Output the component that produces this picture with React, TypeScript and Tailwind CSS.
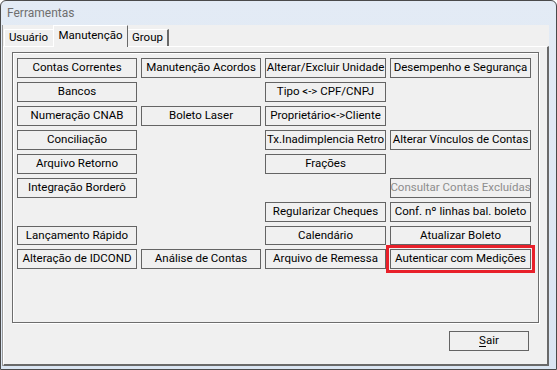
import React from "react"

type Btn = { label: string; disabled?: boolean; highlight?: boolean } | null

const rows: Btn[][] = [
  [{ label: "Contas Correntes" }, { label: "Manutenção Acordos" }, { label: "Alterar/Excluir Unidade" }, { label: "Desempenho e Segurança" }],
  [{ label: "Bancos" }, null, { label: "Tipo <-> CPF/CNPJ" }, null],
  [{ label: "Numeração CNAB" }, { label: "Boleto Laser" }, { label: "Proprietário<->Cliente" }, null],
  [{ label: "Conciliação" }, null, { label: "Tx.Inadimplencia Retro" }, { label: "Alterar Vínculos de Contas" }],
  [{ label: "Arquivo Retorno" }, null, { label: "Frações" }, null],
  [{ label: "Integração Borderô" }, null, null, { label: "Consultar Contas Excluídas", disabled: true }],
  [null, null, { label: "Regularizar Cheques" }, { label: "Conf. nº linhas bal. boleto" }],
  [{ label: "Lançamento Rápido" }, null, { label: "Calendário" }, { label: "Atualizar Boleto" }],
  [{ label: "Alteração de IDCOND" }, { label: "Análise de Contas" }, { label: "Arquivo de Remessa" }, { label: "Autenticar com Medições", highlight: true }],
]

function FlatButton({ btn }: { btn: Btn }) {
  if (!btn) return <div />
  return (
    <div className="relative">
      <button
        className={`flex h-full w-full items-center justify-center whitespace-nowrap border border-[#646464] bg-[#f0f0f0] text-[11.5px] leading-none ${
          btn.disabled ? "text-[#8d8d8d]" : "text-[#000]"
        }`}
      >
        {btn.label}
      </button>
      {btn.highlight && (
        <div className="pointer-events-none absolute -left-[4px] -right-[4px] -top-[4px] -bottom-[4px] border-[3px] border-[#e8202a]" />
      )}
    </div>
  )
}

export default function App() {
  return (
    <div className="h-[370px] w-[557px] bg-white font-['Roboto',sans-serif]">
      <div className="flex h-full w-full flex-col rounded-t-[6px] border border-[#4a4a4a] bg-gradient-to-b from-[#e3ebf5] to-[#dae5f2]">
        {/* title bar */}
        <div className="flex h-[24px] items-center pl-[6px] text-[12px] text-[#6f6f6f]">Ferramentas</div>

        {/* client area */}
        <div className="mb-[3px] ml-[1px] mr-[7px] flex flex-1 flex-col border-l border-[#9a9a9a] bg-[#f0f0f0]">
          {/* tabs */}
          <div className="flex h-[21px] items-end pl-[1px] text-[11.5px] text-[#000]">
            <div className="flex h-[17px] w-[49px] items-center justify-center border-l border-t border-white pr-[1px]">
              Usuário
            </div>
            <div className="relative z-10 -mb-[1px] flex h-[22px] w-[75px] items-center justify-center border-l border-t border-r border-l-white border-t-white border-r-[#696969] bg-[#f0f0f0] pb-[2px]">
              Manutenção
            </div>
            <div className="flex h-[17px] w-[41px] items-center justify-center border-r-2 border-t border-r-[#696969] border-t-white">
              Group
            </div>
          </div>

          {/* tab page */}
          <div className="flex flex-1 flex-col border-b-2 border-l border-r-2 border-t border-b-[#696969] border-l-white border-r-[#696969] border-t-white px-[8px] pt-[5px]">
            <div className="h-[271px] border border-[#6d6d6d] pl-[4px] pt-[5px] shadow-[1px_1px_0_#ffffff,inset_1px_1px_0_#ffffff]">
              <div className="grid grid-cols-[120px_120px_121px_141px] grid-rows-[20px_20px_20px_20px_20px_20px_20px_19px_20px] gap-x-[4px] gap-y-[4px]">
                {rows.flat().map((b, i) => (
                  <FlatButton key={i} btn={b} />
                ))}
              </div>
            </div>

            <div className="flex justify-end pr-[10px] pt-[8px]">
              <button className="flex h-[20px] w-[80px] items-center justify-center border border-[#646464] bg-[#f0f0f0] text-[11.5px] leading-none text-[#000]">
                <span className="underline underline-offset-2">S</span>air
              </button>
            </div>
          </div>
        </div>
      </div>
    </div>
  )
}
